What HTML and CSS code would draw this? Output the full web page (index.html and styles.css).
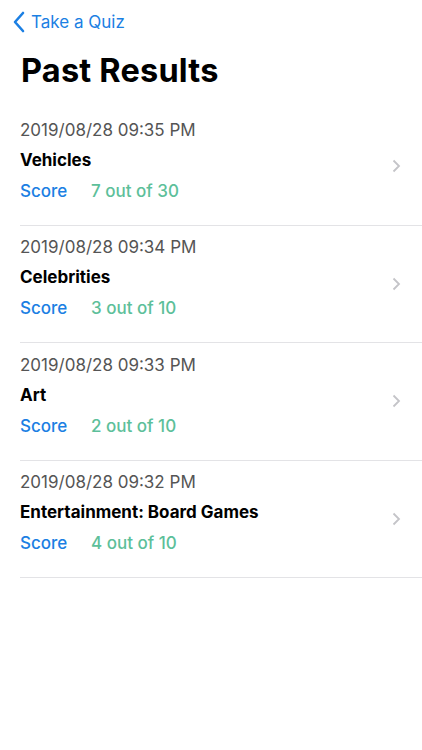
FILE: index.html
```html
<!DOCTYPE html>
<html>
<head>
  <title>Past Results</title>
  <meta name="viewport" content="width=device-width, initial-scale=1">
  <link rel="stylesheet" href="styles.css">
</head>
<body>
  <div class="nav">
    <a class="back" href="#">
      <svg width="14" height="22" viewBox="0 0 14 22"><path d="M11 2 L3 11 L11 20" fill="none" stroke="#1b7fe3" stroke-width="2.6" stroke-linecap="round" stroke-linejoin="round"/></svg>
      <span>Take a Quiz</span>
    </a>
  </div>
  <h1 class="title">Past Results</h1>

  <ul class="results">
    <li class="row">
      <div class="info">
        <div class="date">2019/08/28 09:35 PM</div>
        <div class="name">Vehicles</div>
        <div class="score"><span class="label">Score</span><span class="value">7 out of 30</span></div>
      </div>
      <svg class="chev" width="9" height="14" viewBox="0 0 9 14"><path d="M1.5 1.5 L7 7 L1.5 12.5" fill="none" stroke="#c4c4c8" stroke-width="1.8"/></svg>
    </li>
    <li class="row">
      <div class="info">
        <div class="date">2019/08/28 09:34 PM</div>
        <div class="name">Celebrities</div>
        <div class="score"><span class="label">Score</span><span class="value">3 out of 10</span></div>
      </div>
      <svg class="chev" width="9" height="14" viewBox="0 0 9 14"><path d="M1.5 1.5 L7 7 L1.5 12.5" fill="none" stroke="#c4c4c8" stroke-width="1.8"/></svg>
    </li>
    <li class="row">
      <div class="info">
        <div class="date">2019/08/28 09:33 PM</div>
        <div class="name">Art</div>
        <div class="score"><span class="label">Score</span><span class="value">2 out of 10</span></div>
      </div>
      <svg class="chev" width="9" height="14" viewBox="0 0 9 14"><path d="M1.5 1.5 L7 7 L1.5 12.5" fill="none" stroke="#c4c4c8" stroke-width="1.8"/></svg>
    </li>
    <li class="row">
      <div class="info">
        <div class="date">2019/08/28 09:32 PM</div>
        <div class="name">Entertainment: Board Games</div>
        <div class="score"><span class="label">Score</span><span class="value">4 out of 10</span></div>
      </div>
      <svg class="chev" width="9" height="14" viewBox="0 0 9 14"><path d="M1.5 1.5 L7 7 L1.5 12.5" fill="none" stroke="#c4c4c8" stroke-width="1.8"/></svg>
    </li>
  </ul>
</body>
</html>
```
FILE: styles.css
```css
/* base */
body {
  margin: 0;
  background: #fff;
  font-family: "Inter", "Roboto", "Liberation Sans", sans-serif;
  color: #000;
}

/* barra de navegação */
.nav {
  height: 44px;
  display: flex;
  align-items: center;
}

.back {
  display: flex;
  align-items: center;
  gap: 5px;
  padding-left: 12px;
  color: #1b7fe3;
  text-decoration: none;
  font-size: 17px;
}

.title {
  margin: 7px 0 0 21px;
  font-size: 32.5px;
  font-weight: 700;
  letter-spacing: 0.2px;
  line-height: 40px;
}

/* lista */
.results {
  list-style: none;
  margin: 17px 0 0 20px;
  padding: 0;
}

.row {
  height: 116.5px;
  border-bottom: 1px solid #e3e3e6;
  display: flex;
  align-items: center;
  padding-right: 21px;
}

.info {
  flex: 1;
  padding-bottom: 11px;
}

.date {
  font-size: 17px;
  color: #555;
  line-height: 30px;
}

.name {
  font-size: 17px;
  font-weight: 700;
  line-height: 31px;
}

.score {
  font-size: 17px;
  font-weight: 500;
  line-height: 31px;
}

.label {
  color: #1b7fe3;
  display: inline-block;
  width: 71px;
}

.value {
  color: #5dbf9a;
}
```
